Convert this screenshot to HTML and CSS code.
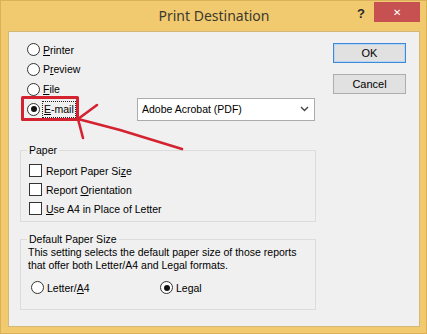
FILE: index.html
```html
<!DOCTYPE html>
<html>
<head>
<meta charset="utf-8">
<link rel="stylesheet" href="styles.css">
</head>
<body>
<div class="window">
  <div class="titlebar">
    <div></div>
    <div class="title">Print Destination</div>
    <div class="controls">
      <span class="help">?</span>
      <span class="close">&#x2715;</span>
    </div>
  </div>
  <div class="client">
    <div class="left">
      <div class="options">
        <div class="row first"><span class="radio"></span><span><u>P</u>rinter</span></div>
        <div class="row"><span class="radio"></span><span>P<u>r</u>eview</span></div>
        <div class="row"><span class="radio"></span><span><u>F</u>ile</span></div>
        <div class="row email">
          <span class="radio checked"></span><span class="focus"><u>E</u>-mail</span>
          <div class="select"><span>Adobe Acrobat (PDF)</span>
            <svg class="chev" width="9" height="6" viewBox="0 0 9 6"><path d="M1 1 L4.5 4.5 L8 1" fill="none" stroke="#444" stroke-width="1.4"/></svg>
          </div>
        </div>
      </div>
      <div class="group paper">
        <div class="gtitle">Paper</div>
        <div class="rows">
          <div class="crow"><span class="check"></span><span>Report Paper Si<u>z</u>e</span></div>
          <div class="crow"><span class="check"></span><span>Report <u>O</u>rientation</span></div>
          <div class="crow"><span class="check"></span><span><u>U</u>se A4 in Place of Letter</span></div>
        </div>
      </div>
      <div class="group dps">
        <div class="gtitle">Default Paper Size</div>
        <div class="desc">This setting selects the default paper size of those reports<br>that offer both Letter/A4 and Legal formats.</div>
        <div class="sizes">
          <div class="srow letter"><span class="radio"></span><span>Letter/<u>A</u>4</span></div>
          <div class="srow"><span class="radio checked"></span><span>Le<u>g</u>al</span></div>
        </div>
      </div>
    </div>
    <div class="right">
      <div class="btn ok">OK</div>
      <div class="btn">Cancel</div>
    </div>
  </div>
</div>
<svg class="annot" width="427" height="334" viewBox="0 0 427 334">
  <g fill="none" stroke="#d42330" stroke-width="3" stroke-linecap="round" stroke-linejoin="round">
    <rect x="22.5" y="97.5" width="55" height="22" stroke-linecap="butt"/>
    <path d="M78 119 L120 130 L182 149" stroke-width="2.6"/>
    <path d="M78 119 L97 105" stroke-width="2.6"/>
    <path d="M78 119 L83 138" stroke-width="2.6"/>
  </g>
</svg>
</body>
</html>
```
FILE: styles.css
```css
html, body {
  margin: 0;
  padding: 0;
}
body {
  width: 427px;
  height: 334px;
  overflow: hidden;
  position: relative;
  background: #f1c96e;
  font-family: "Liberation Sans", Arial, sans-serif;
  font-size: 10.5px;
  color: #000;
}
.window {
  box-sizing: border-box;
  width: 427px;
  height: 334px;
  border: 1px solid #dbb058;
  padding: 0 6px 6px 7px;
  display: flex;
  flex-direction: column;
}
.titlebar {
  height: 30px;
  display: grid;
  grid-template-columns: 1fr auto 1fr;
  align-items: start;
}
.title {
  font-family: "Noto Sans", "Open Sans", sans-serif;
  font-size: 14px;
  color: #3c3a30;
  line-height: 30px;
}
.controls {
  display: flex;
  justify-content: flex-end;
  align-items: flex-start;
}
.help {
  font-family: "Liberation Sans", Arial, sans-serif;
  font-weight: bold;
  font-size: 13px;
  color: #2a2a2a;
  margin-top: 5px;
  margin-right: 9px;
}
.close {
  width: 46px;
  height: 20px;
  margin-top: 1px;
  background: #c75050;
  color: #fff;
  font-size: 10px;
  display: flex;
  align-items: center;
  justify-content: center;
}
.client {
  flex: 1;
  background: #f0f0f0;
  border: 1px solid #d2b879;
  display: flex;
  align-items: flex-start;
}
.left {
  width: 296px;
  margin-left: 11px;
  padding-top: 8px;
}
.options {
  padding-left: 7px;
}
.row {
  height: 20px;
  display: flex;
  align-items: center;
  gap: 3px;
}
.row.first {
  height: 19px;
}
.radio {
  box-sizing: border-box;
  width: 13px;
  height: 13px;
  border: 1px solid #333;
  border-radius: 50%;
  background: #fff;
  display: inline-flex;
  align-items: center;
  justify-content: center;
  flex: none;
}
.radio.checked::after {
  content: "";
  width: 6px;
  height: 6px;
  border-radius: 50%;
  background: #111;
}
.focus {
  outline: 1px dotted #222;
  outline-offset: 0;
  padding: 0 1px;
  line-height: 15px;
}
.select {
  box-sizing: border-box;
  height: 23px;
  width: 178px;
  margin-left: auto;
  margin-right: 1px;
  background: #fff;
  border: 1px solid #acacac;
  display: flex;
  align-items: center;
  justify-content: space-between;
  padding: 0 5px 0 4px;
}
.chev {
  display: block;
}
.group {
  border: 1px solid #dcdcdc;
}
.gtitle {
  display: table;
  margin-top: -7px;
  margin-left: 6px;
  padding: 0 2px;
  background: #f0f0f0;
  line-height: 13px;
}
.paper {
  margin-top: 31px;
  padding-bottom: 3px;
}
.rows {
  margin-top: 4px;
  padding-left: 8px;
}
.crow {
  height: 19px;
  display: flex;
  align-items: center;
  gap: 4px;
}
.check {
  box-sizing: border-box;
  width: 13px;
  height: 13px;
  border: 1px solid #333;
  background: #fff;
  flex: none;
}
.dps {
  margin-top: 17px;
  padding-bottom: 12px;
}
.desc {
  line-height: 13px;
  padding-left: 7px;
}
.sizes {
  display: flex;
  margin-top: 6px;
  padding-left: 10px;
}
.srow {
  height: 19px;
  display: flex;
  align-items: center;
  gap: 3px;
}
.srow.letter {
  width: 129px;
}
.right {
  margin-left: 17px;
  padding-top: 11px;
  display: flex;
  flex-direction: column;
  gap: 11px;
}
.btn {
  box-sizing: border-box;
  width: 73px;
  height: 20px;
  border: 1px solid #adadad;
  background: #e1e1e1;
  display: flex;
  align-items: center;
  justify-content: center;
  font-size: 11px;
}
.btn.ok {
  border-color: #3c8ad8;
  box-shadow: inset 0 0 0 1px #b9d6f2;
}
.annot {
  position: absolute;
  left: 0;
  top: 0;
  pointer-events: none;
}
```
